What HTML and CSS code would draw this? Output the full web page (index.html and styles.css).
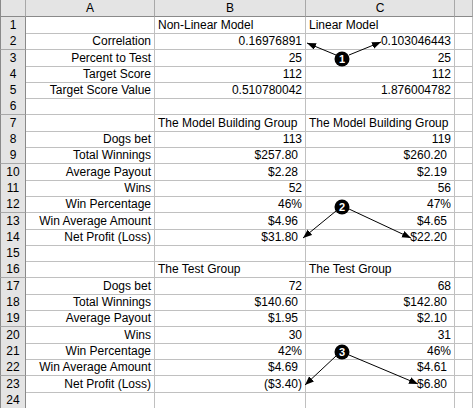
FILE: index.html
```html
<!DOCTYPE html>
<html>
<head>
<meta charset="utf-8">
<link rel="stylesheet" href="styles.css">
</head>
<body>
<div class="sheet">
  <div class="row head"><div class="rh corner"></div><div class="ch">A</div><div class="ch">B</div><div class="ch">C</div><div class="ch"></div></div>
  <div class="row"><div class="rh">1</div><div class="c"></div><div class="c l">Non-Linear Model</div><div class="c l">Linear Model</div><div class="c"></div></div>
  <div class="row"><div class="rh">2</div><div class="c r">Correlation</div><div class="c r">0.16976891</div><div class="c r">0.103046443</div><div class="c"></div></div>
  <div class="row"><div class="rh">3</div><div class="c r">Percent to Test</div><div class="c r">25</div><div class="c r">25</div><div class="c"></div></div>
  <div class="row"><div class="rh">4</div><div class="c r">Target Score</div><div class="c r">112</div><div class="c r">112</div><div class="c"></div></div>
  <div class="row"><div class="rh">5</div><div class="c r">Target Score Value</div><div class="c r">0.510780042</div><div class="c r">1.876004782</div><div class="c"></div></div>
  <div class="row"><div class="rh">6</div><div class="c"></div><div class="c"></div><div class="c"></div><div class="c"></div></div>
  <div class="row"><div class="rh">7</div><div class="c"></div><div class="c l">The Model Building Group</div><div class="c l">The Model Building Group</div><div class="c"></div></div>
  <div class="row"><div class="rh">8</div><div class="c r">Dogs bet</div><div class="c r">113</div><div class="c r">119</div><div class="c"></div></div>
  <div class="row"><div class="rh">9</div><div class="c r">Total Winnings</div><div class="c r m">$257.80</div><div class="c r m">$260.20</div><div class="c"></div></div>
  <div class="row"><div class="rh">10</div><div class="c r">Average Payout</div><div class="c r m">$2.28</div><div class="c r m">$2.19</div><div class="c"></div></div>
  <div class="row"><div class="rh">11</div><div class="c r">Wins</div><div class="c r">52</div><div class="c r">56</div><div class="c"></div></div>
  <div class="row"><div class="rh">12</div><div class="c r">Win Percentage</div><div class="c r">46%</div><div class="c r">47%</div><div class="c"></div></div>
  <div class="row"><div class="rh">13</div><div class="c r">Win Average Amount</div><div class="c r m">$4.96</div><div class="c r m">$4.65</div><div class="c"></div></div>
  <div class="row"><div class="rh">14</div><div class="c r">Net Profit (Loss)</div><div class="c r m">$31.80</div><div class="c r m">$22.20</div><div class="c"></div></div>
  <div class="row"><div class="rh">15</div><div class="c"></div><div class="c"></div><div class="c"></div><div class="c"></div></div>
  <div class="row"><div class="rh">16</div><div class="c"></div><div class="c l">The Test Group</div><div class="c l">The Test Group</div><div class="c"></div></div>
  <div class="row"><div class="rh">17</div><div class="c r">Dogs bet</div><div class="c r">72</div><div class="c r">68</div><div class="c"></div></div>
  <div class="row"><div class="rh">18</div><div class="c r">Total Winnings</div><div class="c r m">$140.60</div><div class="c r m">$142.80</div><div class="c"></div></div>
  <div class="row"><div class="rh">19</div><div class="c r">Average Payout</div><div class="c r m">$1.95</div><div class="c r m">$2.10</div><div class="c"></div></div>
  <div class="row"><div class="rh">20</div><div class="c r">Wins</div><div class="c r">30</div><div class="c r">31</div><div class="c"></div></div>
  <div class="row"><div class="rh">21</div><div class="c r">Win Percentage</div><div class="c r">42%</div><div class="c r">46%</div><div class="c"></div></div>
  <div class="row"><div class="rh">22</div><div class="c r">Win Average Amount</div><div class="c r m">$4.69</div><div class="c r m">$4.61</div><div class="c"></div></div>
  <div class="row"><div class="rh">23</div><div class="c r">Net Profit (Loss)</div><div class="c r">($3.40)</div><div class="c r m">$6.80</div><div class="c"></div></div>
  <div class="row"><div class="rh">24</div><div class="c"></div><div class="c"></div><div class="c"></div><div class="c"></div></div>

  <svg class="callouts" width="473" height="408" viewBox="0 0 473 408">
    <defs>
      <marker id="ah" markerUnits="userSpaceOnUse" markerWidth="10" markerHeight="8" refX="9" refY="3.5" orient="auto">
        <path d="M0,0 L9,3.5 L0,7 z" fill="#000"/>
      </marker>
    </defs>
    <g stroke="#000" stroke-width="1" fill="none">
      <line x1="336" y1="55" x2="307" y2="43" marker-end="url(#ah)"/>
      <line x1="349" y1="55" x2="381" y2="42" marker-end="url(#ah)"/>
      <line x1="336" y1="211" x2="303" y2="238" marker-end="url(#ah)"/>
      <line x1="349" y1="209" x2="411" y2="238" marker-end="url(#ah)"/>
      <line x1="336" y1="356" x2="305" y2="385" marker-end="url(#ah)"/>
      <line x1="349" y1="355" x2="418" y2="384" marker-end="url(#ah)"/>
    </g>
    <g class="badge">
      <circle cx="342" cy="59" r="7.5"/>
      <text x="342" y="63">1</text>
      <circle cx="342" cy="207" r="7.5"/>
      <text x="342" y="211">2</text>
      <circle cx="342" cy="352" r="7.5"/>
      <text x="342" y="356">3</text>
    </g>
  </svg>
</div>
</body>
</html>
```
FILE: styles.css
```css
html, body {
  margin: 0;
  padding: 0;
  background: #fff;
}
.sheet {
  position: relative;
  width: 473px;
  height: 408px;
  overflow: hidden;
  font-family: "Liberation Sans", Arial, sans-serif;
  font-size: 12px;
  color: #000;
}
.row {
  display: grid;
  grid-template-columns: 26px 129px 151px 149px 18px;
  height: 16.3px;
}
.row.head {
  height: 17px;
}
.row > div {
  box-sizing: border-box;
  border-right: 1px solid #c0c0c0;
  border-bottom: 1px solid #c0c0c0;
  white-space: nowrap;
  line-height: 15px;
  padding: 0 3px;
}
.rh, .ch {
  background: #e4e4e4;
  text-align: center;
}
.row > .rh {
  border-left: 1px solid #8a8a8a;
  border-right: 1px solid #8a8a8a;
  border-bottom: 1px solid #a8a8a8;
  padding: 0;
  line-height: 16px;
}
.row.head > div {
  border-bottom: 1px solid #8a8a8a;
  border-right: 1px solid #a8a8a8;
  line-height: 16px;
}
.row > .c {
  overflow: visible;
  line-height: 16px;
}
.l { text-align: left; }
.r { text-align: right; }
.row > .m { padding-right: 7px; }
.callouts {
  position: absolute;
  left: 0;
  top: 0;
  pointer-events: none;
}
.badge circle {
  fill: #000;
}
.badge text {
  fill: #fff;
  font-family: "Liberation Sans", Arial, sans-serif;
  font-weight: bold;
  font-size: 11px;
  text-anchor: middle;
}
```
